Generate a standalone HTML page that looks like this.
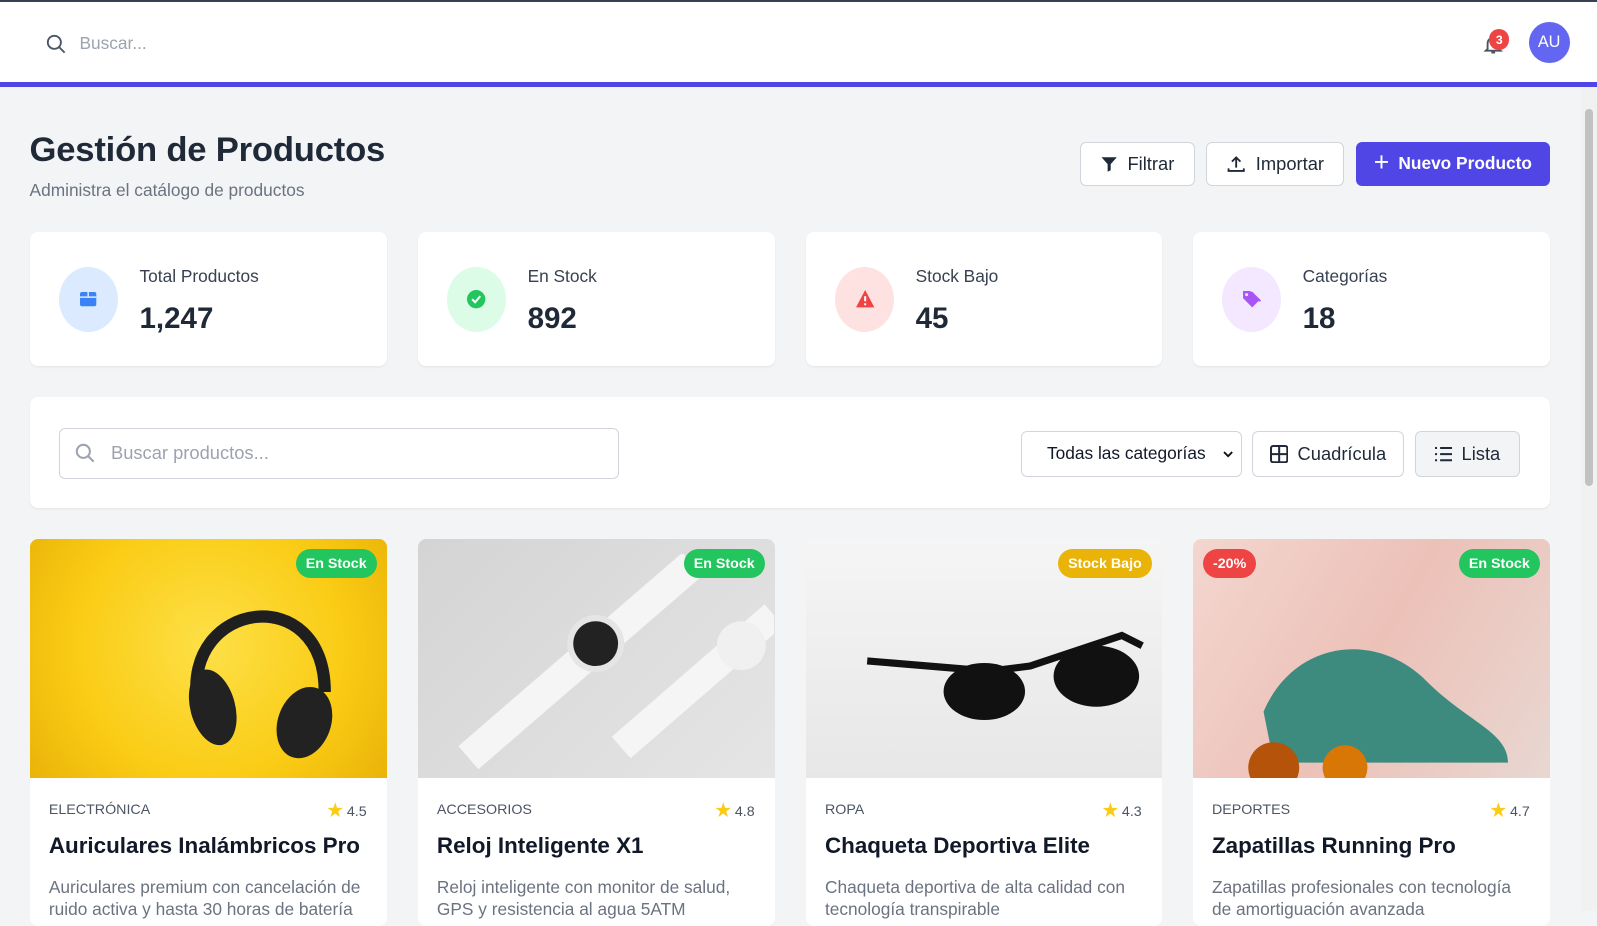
<!DOCTYPE html>
<html><head><meta charset="utf-8">
<style>
html{zoom:1.0185}
*{box-sizing:border-box;margin:0;padding:0}
body{width:1568px;height:894px;overflow:hidden;background:#f3f4f6;font-family:"Liberation Sans",sans-serif;color:#1f2937;position:relative}
.top{height:85px;background:#fff;border-top:2px solid #374151;border-bottom:5px solid #4f46e5;position:relative}
.top .s{position:absolute;left:44px;top:30px;display:flex;align-items:center;gap:12px;color:#9ca3af;font-size:17px}
.av{position:absolute;left:1501px;top:20px;width:40px;height:40px;border-radius:50%;background:#6366f1;color:#fff;font-size:16px;display:flex;align-items:center;justify-content:center}
.bell{position:absolute;left:1455px;top:30px}
.badge{position:absolute;left:1462px;top:27px;width:20px;height:20px;border-radius:50%;background:#ef4444;color:#fff;font-size:12px;font-weight:bold;display:flex;align-items:center;justify-content:center}
.sb{position:absolute;left:1552px;top:85px;width:16px;height:809px;background:#f1f1f1}
.sb div{position:absolute;left:4px;top:22px;width:8px;height:370px;background:#c1c1c1;border-radius:4px}
h1{position:absolute;left:29px;top:129px;font-size:34px;font-weight:600;color:#1f2937;letter-spacing:-0.2px}
.sub{position:absolute;left:29px;top:177px;font-size:17px;color:#6b7280}
.btn{position:absolute;top:139px;height:44px;border:1px solid #d1d5db;border-radius:6px;background:#fff;display:flex;align-items:center;justify-content:center;gap:9px;font-size:18px;color:#1f2937}
.card{position:absolute;background:#fff;border-radius:8px;box-shadow:0 1px 2px rgba(0,0,0,.05)}
.ic{position:absolute;left:29px;top:34px;width:58px;height:64px;border-radius:50%;display:flex;align-items:center;justify-content:center}
.lb{position:absolute;left:108px;top:33px;font-size:17px;color:#374151}
.vl{position:absolute;left:108px;top:69px;font-size:29px;font-weight:600;color:#1f2937}
.pc{position:absolute;top:529px;width:351px;height:380px;background:#fff;border-radius:8px;overflow:hidden}
.pc .im{height:235px;position:relative;overflow:hidden}
.tag{position:absolute;top:10px;height:29px;padding:0 10px;border-radius:15px;color:#fff;font-size:14px;display:flex;align-items:center;font-weight:600}
.cat{position:absolute;left:19px;top:258px;font-size:14px;color:#4b5563}
.rt{position:absolute;right:20px;top:256px;font-size:14px;color:#4b5563}
.rt b{color:#facc15;font-size:17px}
.tt{position:absolute;left:19px;top:289px;font-size:22px;font-weight:600;color:#111827}
.ds{position:absolute;left:19px;top:331px;font-size:17px;color:#6b7280;line-height:22px;width:310px}
</style></head><body>
<div class="top">
 <div class="s"><svg width="22" height="22" viewBox="0 0 24 24" fill="none" stroke="#4b5563" stroke-width="2"><circle cx="10" cy="10" r="7"/><path d="M15 15l6 6"/></svg>Buscar...</div>
 <svg class="bell" width="22" height="22" viewBox="0 0 24 24" fill="none" stroke="#4b5563" stroke-width="2"><path d="M6 17V11a6 6 0 0112 0v6l2 2H4z M10 21h4"/></svg>
 <div class="badge">3</div>
 <div class="av">AU</div>
</div>
<div class="sb"><div></div></div>
<h1>Gestión de Productos</h1>
<div class="sub">Administra el catálogo de productos</div>
<div class="btn" style="left:1060px;width:113px"><svg width="18" height="18" viewBox="0 0 24 24" fill="#1f2937"><path d="M2 3h20l-8 9v8l-4 2V12z"/></svg>Filtrar</div>
<div class="btn" style="left:1184px;width:136px"><svg width="20" height="20" viewBox="0 0 24 24" fill="none" stroke="#1f2937" stroke-width="2.2"><path d="M12 16V4M7 9l5-5 5 5M3 17v3h18v-3"/></svg>Importar</div>
<div class="btn" style="left:1331px;width:191px;background:#4f46e5;border-color:#4f46e5;color:#fff;font-weight:600;font-size:17px"><span style="font-size:26px;font-weight:300;margin-top:-3px">+</span>Nuevo Producto</div>

<div class="card" style="left:29px;top:228px;width:351px;height:131px"><div class="ic" style="background:#dbeafe"><svg width="18" height="18" viewBox="0 0 18 18"><rect x="1" y="2" width="16" height="14" rx="2" fill="#3b82f6"/><path d="M1 7h16M9 2v5" stroke="#dbeafe" stroke-width="1.5"/></svg></div><div class="lb">Total Productos</div><div class="vl">1,247</div></div>
<div class="card" style="left:410px;top:228px;width:351px;height:131px"><div class="ic" style="background:#dcfce7"><svg width="20" height="20" viewBox="0 0 20 20"><circle cx="10" cy="10" r="9" fill="#22c55e"/><path d="M6 10l3 3 5-6" stroke="#fff" stroke-width="2" fill="none"/></svg></div><div class="lb">En Stock</div><div class="vl">892</div></div>
<div class="card" style="left:791px;top:228px;width:350px;height:131px"><div class="ic" style="background:#fee2e2"><svg width="20" height="20" viewBox="0 0 20 20"><path d="M10 1L19 18H1z" fill="#ef4444"/><path d="M10 7v5M10 14v2" stroke="#fff" stroke-width="2"/></svg></div><div class="lb">Stock Bajo</div><div class="vl">45</div></div>
<div class="card" style="left:1171px;top:228px;width:351px;height:131px"><div class="ic" style="background:#f3e8ff"><svg width="22" height="20" viewBox="0 0 22 20"><path d="M2 2h7l9 9-7 7-9-9z" fill="#a855f7"/><path d="M7 3l9 9" stroke="#a855f7" stroke-width="2" transform="translate(3,0)"/><circle cx="5.5" cy="5.5" r="1.5" fill="#f3e8ff"/></svg></div><div class="lb">Categorías</div><div class="vl">18</div></div>

<div class="card" style="left:29px;top:390px;width:1493px;height:109px">
 <div style="position:absolute;left:29px;top:30px;width:550px;height:50px;border:1px solid #d1d5db;border-radius:6px;display:flex;align-items:center;gap:14px;padding-left:14px;color:#9ca3af;font-size:18px"><svg width="22" height="22" viewBox="0 0 24 24" fill="none" stroke="#9ca3af" stroke-width="2.2"><circle cx="10" cy="10" r="7"/><path d="M15 15l6 6"/></svg>Buscar productos...</div>
 <div style="position:absolute;left:973px;top:33px;width:217px;height:45px;border:1px solid #d1d5db;border-radius:6px;display:flex;align-items:center;padding-left:25px;font-size:17px;color:#111827">Todas las categorías<svg style="position:absolute;right:6px" width="12" height="12" viewBox="0 0 12 12"><path d="M2 4l4 4 4-4" stroke="#111" stroke-width="1.8" fill="none"/></svg></div>
 <div style="position:absolute;left:1200px;top:33px;width:150px;height:45px;border:1px solid #d1d5db;border-radius:6px;display:flex;align-items:center;justify-content:center;gap:9px;font-size:18px"><svg width="18" height="18" viewBox="0 0 18 18" fill="none" stroke="#1f2937" stroke-width="2"><rect x="1" y="1" width="16" height="16" rx="2"/><path d="M9 1v16M1 9h16"/></svg>Cuadrícula</div>
 <div style="position:absolute;left:1360px;top:33px;width:103px;height:45px;border:1px solid #d1d5db;border-radius:6px;background:#f3f4f6;display:flex;align-items:center;justify-content:center;gap:9px;font-size:18px"><svg width="18" height="16" viewBox="0 0 18 16" stroke="#1f2937" stroke-width="2"><path d="M1 2h2M1 8h2M1 14h2M6 2h12M6 8h12M6 14h12"/></svg>Lista</div>
</div>

<div class="pc" style="left:29px"><div class="im" style="background:radial-gradient(circle at 50% 45%,#fde047,#facc15 60%,#eab308)">
 <svg style="position:absolute;left:140px;top:40px" width="180" height="180" viewBox="0 0 180 180"><path d="M25 120 C10 20 150 0 150 110" stroke="#1f1f1f" stroke-width="12" fill="none"/><ellipse cx="40" cy="125" rx="22" ry="38" fill="#222" transform="rotate(-15 40 125)"/><ellipse cx="130" cy="140" rx="26" ry="36" fill="#222" transform="rotate(20 130 140)"/></svg>
 <div class="tag" style="right:10px;background:#22c55e">En Stock</div></div>
 <div class="cat">ELECTRÓNICA</div><div class="rt"><b>★</b> 4.5</div><div class="tt">Auriculares Inalámbricos Pro</div><div class="ds">Auriculares premium con cancelación de ruido activa y hasta 30 horas de batería</div></div>
<div class="pc" style="left:410px"><div class="im" style="background:linear-gradient(135deg,#d4d4d4,#e5e5e5)">
 <svg style="position:absolute;left:30px;top:15px" width="320" height="220" viewBox="0 0 320 220"><path d="M20 200 L240 10" stroke="#f5f5f5" stroke-width="30"/><circle cx="145" cy="88" r="28" fill="#e5e5e5"/><circle cx="145" cy="88" r="22" fill="#222"/><path d="M170 190 L320 60" stroke="#f5f5f5" stroke-width="28"/><circle cx="288" cy="90" r="24" fill="#f0f0f0"/></svg>
 <div class="tag" style="right:10px;background:#22c55e">En Stock</div></div>
 <div class="cat">ACCESORIOS</div><div class="rt"><b>★</b> 4.8</div><div class="tt">Reloj Inteligente X1</div><div class="ds">Reloj inteligente con monitor de salud, GPS y resistencia al agua 5ATM</div></div>
<div class="pc" style="left:791px;width:350px"><div class="im" style="background:linear-gradient(180deg,#f5f5f5,#e7e7e7)">
 <svg style="position:absolute;left:50px;top:70px" width="290" height="120" viewBox="0 0 290 120"><path d="M10 50 L130 60 L170 55 L260 25 L280 35" stroke="#111" stroke-width="7" fill="none"/><ellipse cx="125" cy="80" rx="40" ry="28" fill="#111"/><ellipse cx="235" cy="65" rx="42" ry="30" fill="#111"/></svg>
 <div class="tag" style="right:10px;background:#eab308">Stock Bajo</div></div>
 <div class="cat">ROPA</div><div class="rt"><b>★</b> 4.3</div><div class="tt">Chaqueta Deportiva Elite</div><div class="ds">Chaqueta deportiva de alta calidad con tecnología transpirable</div></div>
<div class="pc" style="left:1171px"><div class="im" style="background:linear-gradient(120deg,#f3d6cf,#ecc1b8 50%,#e8d7d1)">
 <svg style="position:absolute;left:40px;top:80px" width="280" height="160" viewBox="0 0 280 160"><path d="M30 90 C60 20 140 10 190 60 C230 100 270 110 270 140 L40 140 Z" fill="#3d8a7e"/><circle cx="40" cy="145" r="25" fill="#b45309"/><circle cx="110" cy="145" r="22" fill="#d97706"/></svg>
 <div class="tag" style="left:10px;background:#ef4444">-20%</div><div class="tag" style="right:10px;background:#22c55e">En Stock</div></div>
 <div class="cat">DEPORTES</div><div class="rt"><b>★</b> 4.7</div><div class="tt">Zapatillas Running Pro</div><div class="ds">Zapatillas profesionales con tecnología de amortiguación avanzada</div></div>
</body></html>
